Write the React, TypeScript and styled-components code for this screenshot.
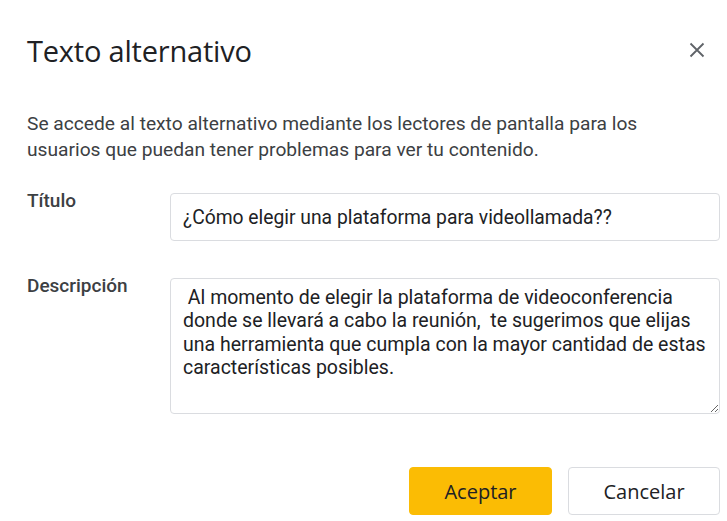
import React from "react";
import styled, { createGlobalStyle } from "styled-components";

const Global = createGlobalStyle`
  html, body { margin: 0; padding: 0; background: #fff; }
  body { font-family: Roboto, "Liberation Sans", Arial, sans-serif; }
  * { box-sizing: border-box; }
`;

const Dialog = styled.div`
  width: 727px;
  height: 521px;
  padding: 0 7px 0 27px;
  display: flex;
  flex-direction: column;
  background: #fff;
`;

const Header = styled.div`
  display: flex;
  align-items: center;
  justify-content: space-between;
  height: 58px;
  margin-top: 21px;
`;

const Title = styled.h1`
  margin: 0;
  font-family: "Open Sans", Roboto, sans-serif;
  font-weight: 400;
  font-size: 29px;
  color: #202124;
  letter-spacing: -0.2px;
`;

const CloseBtn = styled.button`
  width: 32px;
  height: 32px;
  border: none;
  background: transparent;
  padding: 0;
  margin-right: 7px;
  display: flex;
  align-items: center;
  justify-content: center;
  cursor: pointer;
`;

const Intro = styled.p`
  margin: 32px 0 0;
  font-size: 19.2px;
  line-height: 26px;
  color: #3c4043;
  width: 660px;
`;

const Row = styled.div<{ $gap: number }>`
  display: grid;
  grid-template-columns: 143px 1fr;
  align-items: start;
  margin-top: ${(p) => p.$gap}px;
`;

const Label = styled.label`
  font-size: 19px;
  font-weight: 500;
  color: #3c4043;
  line-height: 20px;
  margin-top: -2px;
`;

const TextInput = styled.input`
  height: 48px;
  width: 100%;
  border: 1px solid #dadce0;
  border-radius: 4px;
  padding: 0 12px;
  font-family: Roboto, sans-serif;
  font-size: 19.3px;
  color: #202124;
  outline: none;
`;

const TextArea = styled.textarea`
  height: 136px;
  width: 100%;
  border: 1px solid #dadce0;
  border-radius: 4px;
  padding: 7px 12px;
  font-family: Roboto, sans-serif;
  font-size: 19.5px;
  line-height: 23.3px;
  color: #202124;
  resize: both;
  outline: none;
  white-space: pre-wrap;
  overflow: hidden;
`;

const Footer = styled.div`
  display: flex;
  justify-content: flex-end;
  gap: 16px;
  margin-top: 53px;
`;

const Button = styled.button<{ $primary?: boolean }>`
  height: 48px;
  width: ${(p) => (p.$primary ? 143 : 152)}px;
  border-radius: 4px;
  border: 1px solid ${(p) => (p.$primary ? "#fbbc04" : "#dadce0")};
  background: ${(p) => (p.$primary ? "#fbbc04" : "#fff")};
  font-family: "Open Sans", Roboto, sans-serif;
  font-size: 20px;
  font-weight: 500;
  color: #202124;
  cursor: pointer;
`;

const desc =
  " Al momento de elegir la plataforma de videoconferencia\ndonde se llevará a cabo la reunión,  te sugerimos que elijas\nuna herramienta que cumpla con la mayor cantidad de estas\ncaracterísticas posibles.";

export default function App() {
  return (
    <>
      <Global />
      <Dialog>
        <Header>
          <Title>Texto alternativo</Title>
          <CloseBtn aria-label="Cerrar">
            <svg width="16" height="16" viewBox="0 0 16 16">
              <path d="M1.5 1.5 L14.5 14.5 M14.5 1.5 L1.5 14.5" stroke="#5f6368" strokeWidth="1.8" fill="none" />
            </svg>
          </CloseBtn>
        </Header>
        <Intro>
          Se accede al texto alternativo mediante los lectores de pantalla para los usuarios que puedan tener problemas para ver tu contenido.
        </Intro>
        <Row $gap={30}>
          <Label>Título</Label>
          <TextInput defaultValue="¿Cómo elegir una plataforma para videollamada??" />
        </Row>
        <Row $gap={37}>
          <Label>Descripción</Label>
          <TextArea defaultValue={desc} />
        </Row>
        <Footer>
          <Button $primary>Aceptar</Button>
          <Button>Cancelar</Button>
        </Footer>
      </Dialog>
    </>
  );
}
